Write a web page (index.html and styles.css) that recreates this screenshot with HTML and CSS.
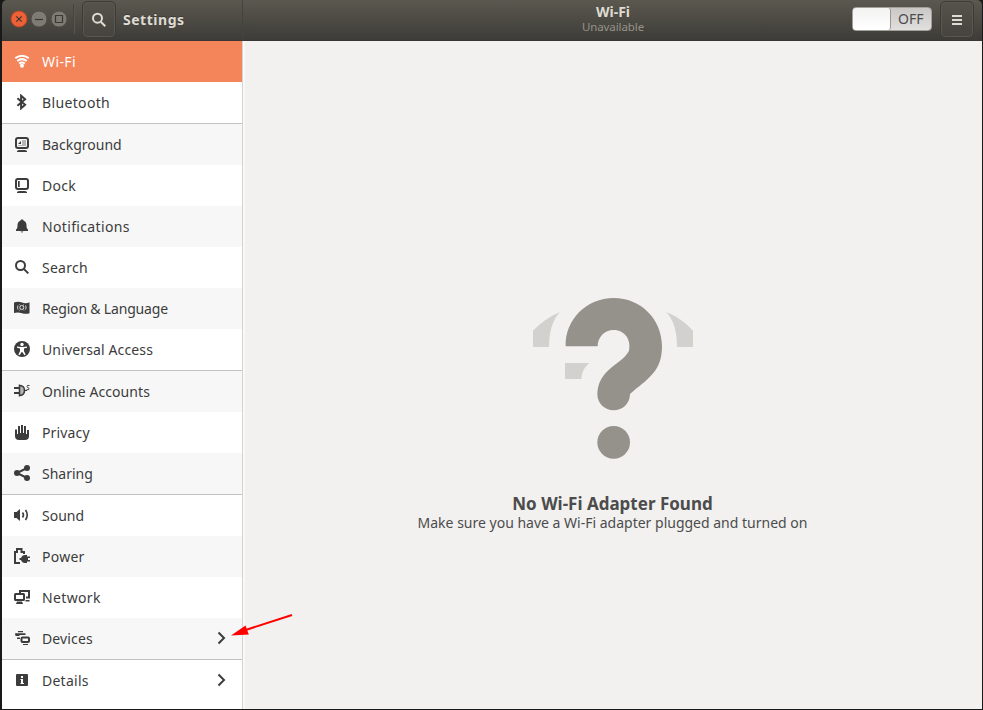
FILE: index.html
```html
<!DOCTYPE html>
<html lang="en">
<head>
<meta charset="utf-8">
<title>Settings</title>
<link rel="stylesheet" href="styles.css">
</head>
<body>
<div class="window">
  <header class="titlebar">
    <div class="title-left">
      <div class="controls">
        <svg class="control" viewBox="0 0 18 18"><circle class="close-disc" cx="9" cy="9" r="8"/><path class="glyph" d="M6.3 6.3l5.4 5.4M11.7 6.3l-5.4 5.4"/></svg>
        <svg class="control" viewBox="0 0 18 18"><circle class="grey-disc" cx="9" cy="9" r="8"/><path class="glyph" d="M5 9.5h8"/></svg>
        <svg class="control" viewBox="0 0 18 18"><circle class="grey-disc" cx="9" cy="9" r="8"/><path class="glyph" d="M5.5 5.5h7v7h-7z"/></svg>
      </div>
      <div class="groove"></div>
      <button class="tool"><svg class="icon" viewBox="0 0 16 16"><circle class="line" cx="6.5" cy="6.2" r="4.5"/><path class="line" d="M9.8 9.7l4.500 4.500"/></svg></button>
      <span class="app-title">Settings</span>
    </div>
    <div class="title-main">
      <div class="heading"><span class="page-title">Wi-Fi</span><span class="page-state">Unavailable</span></div>
      <div class="switch"><span class="knob"></span><span class="off">OFF</span></div>
      <button class="tool menu"><svg class="icon" viewBox="0 0 16 16"><path class="fill" d="M3 3h10v2H3zM3 7h10v2H3zM3 11h10v2H3z"/></svg></button>
    </div>
  </header>
  <div class="body">
    <nav class="sidebar">
      <section class="group">
        <div class="row selected"><svg class="icon" viewBox="0 0 16 16"><path class="line" d="M1.3 5.1Q8 .2 14.7 5.1M3.3 8Q8 4.3 12.7 8M5.2 10.6Q8 8.4 10.8 10.6"/><circle class="fill" cx="8" cy="12.8" r="2"/></svg><span class="w-wifi">Wi-Fi</span></div>
        <div class="row"><svg class="icon" viewBox="0 0 16 16"><path class="line" d="M3.400 4.300l7.700 6.500-4 3.500V1.700l4 3.500-7.700 6.500"/></svg><span class="w-bluetooth">Bluetooth</span></div>
      </section>
      <section class="group">
        <div class="row alt low"><svg class="icon" viewBox="0 0 16 16"><rect class="line" x="2" y="1" width="12" height="10" rx="2"/><path class="fill" d="M3 14q1-1 2.500-1h5q1.500 0 2.500 1v1H3z"/><path class="fill soft" d="M8 3h4v6H4V8h4z"/><path class="fill" d="M4 7l3-3v3z"/></svg><span>Background</span></div>
        <div class="row low"><svg class="icon" viewBox="0 0 16 16"><rect class="line" x="2" y="1" width="12" height="10" rx="2"/><path class="fill" d="M3 14q1-1 2.500-1h5q1.500 0 2.500 1v1H3zM4 3h1.700v6H4z"/></svg><span class="w-dock">Dock</span></div>
        <div class="row alt"><svg class="icon" viewBox="0 0 16 16"><path class="fill" d="M8 1.500c1 0 1.500.5 1.700 1.200C12 3.500 12.500 5.500 12.500 7.500c0 2.500.6 3.200 1.500 4V13H2v-1.500C2.900 10.700 3.500 10 3.500 7.500c0-2 .5-4 2.800-4.800C6.500 2 7 1.500 8 1.500zM6.500 13.600h3L8 14.700z"/></svg><span class="w-notifications">Notifications</span></div>
        <div class="row"><svg class="icon" viewBox="0 0 16 16"><circle class="line" cx="6.500" cy="6.500" r="4.500"/><path class="line" d="M9.800 9.900l4.500 4.500"/></svg><span class="w-search">Search</span></div>
        <div class="row alt"><svg class="icon" viewBox="0 0 16 16"><path class="fill" d="M0 2.500q4-1.500 8 0t7.500-.3v11q-3.500 1.200-7.500 0T0 13z"/><g class="cutline"><circle cx="7.800" cy="7.500" r="2"/><path d="M4 5.500q-1 2 0 4M11.600 5.500q1 2 0 4M5.500 4.500l.8.800M10 4.500l-.8.800M5.500 10.500l.8-.8M10 10.500l-.8-.8"/></g></svg><span class="w-region">Region &amp; Language</span></div>
        <div class="row"><svg class="icon" viewBox="0 0 16 16"><circle class="fill" cx="8" cy="8" r="8"/><circle class="cut" cx="8" cy="3.500" r="1.700"/><path class="cut" d="M3 5.500l4 .5h2l4-.5v1.300l-3 .8v2.700l1.700 3.200-1.200.7L8.300 11h-.6l-2.200 3.200-1.200-.7L6 10.300V7.600l-3-.8z"/></svg><span class="w-universal">Universal Access</span></div>
      </section>
      <section class="group">
        <div class="row alt"><svg class="icon" viewBox="0 0 16 16"><path class="soft fill" d="M5 3q5 0 5 4.500T5 12z"/><path class="line thin" d="M5.500 1.500v12M5 2.500q5.500 0 5.500 5t-5.500 5"/><path class="fill" d="M0 4h5v2H0zM0 9h5v2H0z"/><path class="line fine" d="M15.500 2.500q-2.500-.7-2.500 1c0 1.500 2.300.8 2.100 2.500q0 1.300-2.600.6M11 7.500h2"/></svg><span class="w-online">Online Accounts</span></div>
        <div class="row"><svg class="icon" viewBox="0 0 16 16"><path class="fill" d="M1 5.500h2V10h1V2h2v7h1V1h2v8h1V2h2v8h1V6h2v6q0 4-4 4H5q-4 0-4-4z"/></svg><span class="w-privacy">Privacy</span></div>
        <div class="row alt"><svg class="icon" viewBox="0 0 16 16"><path class="line" d="M13 3L3 8l10 5"/><circle class="fill" cx="3" cy="8" r="3"/><circle class="fill" cx="13" cy="3" r="3"/><circle class="fill" cx="13" cy="13" r="3"/></svg><span>Sharing</span></div>
      </section>
      <section class="group">
        <div class="row"><svg class="icon" viewBox="0 0 16 16"><path class="fill" d="M0 5h2.500L6 2v12L2.500 11H0z"/><path class="line thin" d="M8.500 5.500q2 2.500 0 5M11.500 3q3.500 5 0 10"/></svg><span>Sound</span></div>
        <div class="row alt"><svg class="icon" viewBox="0 0 16 16"><path class="line" d="M6 15H1V4h2V1h4.500v3H10v2"/><path class="fill" d="M5.500 10h1.500q1-3 4-3h2v1.500h3V10h-2v2h2v1.500h-3V15h-2q-3 0-4-3H5.500z"/></svg><span class="w-power">Power</span></div>
        <div class="row"><svg class="icon" viewBox="0 0 16 16"><path class="line" d="M6 4V2h9v6.500h-3"/><rect class="line" x="1" y="5" width="9" height="6" rx=".5"/><path class="fill" d="M3 12.500h5l1 2.500H2zM11.500 11h4v1.500h-4z"/></svg><span class="w-network">Network</span></div>
        <div class="row alt"><svg class="icon" viewBox="0 0 16 16"><path class="fill" d="M4 1h5v1.200H4zM1 3.200h10.500V5H5.500v1H1.500zM3 7.500h3V9H3z"/><rect class="line" x="7.500" y="7.500" width="7.500" height="4.500" rx="1"/><path class="fill" d="M9 14h5v1H9z"/></svg><span class="w-devices">Devices</span><svg class="chevron" viewBox="0 0 9 14"><path class="line" d="M1.500 1.500L7 7l-5.500 5.500"/></svg></div>
      </section>
      <section class="group last">
        <div class="row"><svg class="icon" viewBox="0 0 16 16"><rect class="fill" x="2" y="2" width="12" height="12" rx="1"/><path class="cut" d="M7 4h2v2H7zM6.500 7H9v4h1v1H6.500v-1H7V8h-.5z"/></svg><span class="w-details">Details</span><svg class="chevron" viewBox="0 0 9 14"><path class="line" d="M1.500 1.500L7 7l-5.500 5.500"/></svg></div>
      </section>
    </nav>
    <main class="content">
      <svg class="missing" viewBox="69 54 480 483">
        <path class="waves" d="M69 152Q105 115 150 96Q117 130 117 201H69zM469 96Q515 115 549 152V201H501Q501 130 469 96zM165 249H238Q214 268 214 297H165z"/>
        <path class="question" d="M167 199C165 118 230 54 311 54C392 54 456 117 456 199C456 276 412 297 360 342C360 370 338 391 311 391C284 391 262 370 262 343C264 265 335 255 357 212C364 180 345 150 311 150C283 150 263 172 263 199z"/>
        <circle class="question" cx="311" cy="487" r="49"/>
      </svg>
      <h1 class="message">No Wi-Fi Adapter Found</h1>
      <p class="hint">Make sure you have a Wi-Fi adapter plugged and turned on</p>
    </main>
  </div>
  <svg class="arrow" viewBox="0 0 64 26"><path class="shaft" d="M62 2L14 17.500"/><path class="head" d="M1 22.500L15.500 12.500 18.800 21.500z"/></svg>
</div>
</body>
</html>
```
FILE: styles.css
```css
* { box-sizing: border-box; }
body { margin: 0; background: #191919; font: 14px/20px "Noto Sans", "Open Sans", sans-serif; color: #3c3c3c; }
.window { position: relative; width: 983px; height: 710px; padding: 0 1px 1px 2px; display: flex; flex-direction: column; background: #191919; }
.titlebar { display: flex; flex: none; height: 41px; background: linear-gradient(#5b584f, #3d3c38); border-bottom: 1px solid #383733; border-radius: 5px 5px 0 0; color: #dfdbd2; }
.title-left { display: flex; align-items: center; width: 241px; padding: 0 0 3px 8px; border-right: 1px solid #45433d; }
.controls { display: flex; gap: 2px; }
.control { width: 18px; height: 18px; }
.close-disc { fill: #ec6137; stroke: #bd4522; }
.grey-disc { fill: #7e7b73; stroke: #504e48; }
.glyph { fill: none; stroke: #3b3935; stroke-width: 1.2; }
.groove { width: 2px; height: 30px; margin-left: 5px; border-left: 1px solid #45433e; border-right: 1px solid #5a574f; }
.tool { display: flex; align-items: center; justify-content: center; width: 34px; height: 37px; margin: 2px 0 0 7px; padding: 0; background: linear-gradient(#56534b, #45433e); border: 1px solid #3d3b36; border-radius: 5px; color: #dfdbd2; box-shadow: inset 0 0 0 1px #5a574f; }
.app-title { margin: 2px 0 0 7px; font-weight: 700; letter-spacing: .52px; text-shadow: 0 -1px #3b3935; }
.title-main { display: flex; flex: 1; align-items: center; padding: 0 8px 3px 0; }
.heading { display: flex; flex: 1; flex-direction: column; align-items: center; padding-left: 131px; }
.page-title { font-size: 14px; font-weight: 700; line-height: 15px; }
.page-state { margin-top: 1px; font-size: 11.5px; line-height: 14px; letter-spacing: -.1px; color: #96938a; }
.switch { display: flex; align-items: center; width: 80px; height: 24px; background: linear-gradient(#c9c8c6, #e1e0de); border: 1px solid #a2a09b; border-radius: 4px; color: #4c4c4c; }
.knob { width: 38px; height: 22px; background: linear-gradient(#f3f3f2, #fff); border-right: 1px solid #97958e; border-radius: 3px; }
.off { margin-left: 7px; }
.tool.menu { margin-left: 8px; }
.icon { flex: none; width: 16px; height: 16px; }
.line { fill: none; stroke: currentColor; stroke-width: 2; }
.thin { stroke-width: 1.6; }
.fine { stroke-width: 1; }
.fill { fill: currentColor; }
.soft { opacity: .35; }
.cut { fill: #fff; }
.cutline { fill: none; stroke: #fff; stroke-width: .8; }
.body { display: flex; flex: 1; min-height: 0; }
.sidebar { width: 241px; background: #fff; border-right: 1px solid #d5d4d2; }
.group { border-bottom: 1px solid #c3c3c3; }
.group.last { border-bottom: 0; }
.row { display: flex; align-items: center; height: 41px; padding: 0 16px 0 12px; gap: 12px; }
.row .icon { margin-bottom: 1px; }
.row.low .icon { margin: 1px 0 0; }
.alt { background: #f7f7f7; }
.selected { background: #f4845a; color: #fff; }
.w-wifi { letter-spacing: .4px; }
.w-bluetooth, .w-notifications, .w-network { letter-spacing: .35px; }
.w-dock, .w-search, .w-power, .w-details { letter-spacing: .25px; }
.w-region { letter-spacing: -.18px; }
.w-universal, .w-devices, .w-privacy { letter-spacing: .14px; }
.w-online { letter-spacing: .07px; }
.chevron { width: 9px; height: 14px; margin: 0 0 1px auto; }
.content { display: flex; flex: 1; flex-direction: column; align-items: center; padding: 257px 2px 0 0; background: #f2f1f0; border-left: 2px solid #f8f8f7; }
.missing { width: 160px; height: 161px; }
.waves { fill: #d2d1ce; }
.question { fill: #95928c; }
.message { margin: 34px 0 0; font-size: 17px; line-height: 22px; color: #4c4c4c; white-space: nowrap; }
.hint { margin: -2px 0 0; color: #4c4c4c; white-space: nowrap; }
.arrow { position: absolute; left: 230px; top: 613px; width: 64px; height: 26px; }
.shaft { fill: none; stroke: #f00; stroke-width: 2; }
.head { fill: #f00; }
```
